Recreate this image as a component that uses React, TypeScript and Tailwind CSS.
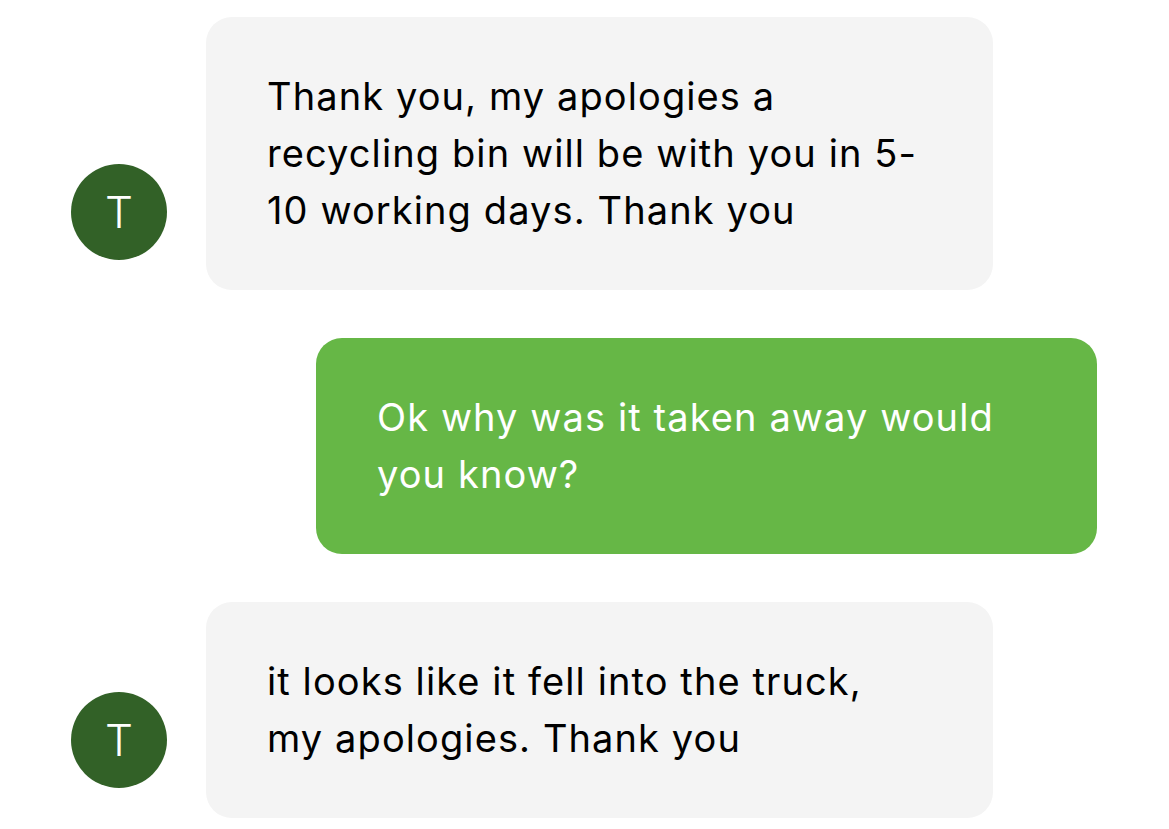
type Message = {
  from: "them" | "me"
  lines: string[]
}

const messages: Message[] = [
  {
    from: "them",
    lines: [
      "Thank you, my apologies a",
      "recycling bin will be with you in 5-",
      "10 working days. Thank you",
    ],
  },
  { from: "me", lines: ["Ok why was it taken away would", "you know?"] },
  {
    from: "them",
    lines: ["it looks like it fell into the truck,", "my apologies. Thank you"],
  },
]

function Avatar() {
  return (
    <div className="mb-[30px] flex h-[96px] w-[96px] shrink-0 items-center justify-center rounded-full bg-[#326127] text-[44px] font-light leading-none text-white">
      T
    </div>
  )
}

function Bubble({ msg }: { msg: Message }) {
  const mine = msg.from === "me"
  return (
    <div
      className={
        mine
          ? "w-[781px] rounded-[26px] bg-[#66b746] px-[61px] py-[51px] text-white"
          : "w-[787px] rounded-[26px] bg-[#f4f4f4] px-[61px] py-[51px] text-black"
      }
    >
      {msg.lines.map((line) => (
        <div
          key={line}
          className="whitespace-nowrap text-[38px] leading-[57px] tracking-[1.1px]"
        >
          {line}
        </div>
      ))}
    </div>
  )
}

export default function App() {
  return (
    <div
      className="flex min-h-screen w-[1169px] flex-col gap-[48px] bg-white pt-[17px] pb-[12px]"
      style={{ fontFamily: "Inter, 'Noto Sans', sans-serif" }}
    >
      {messages.map((msg, i) =>
        msg.from === "me" ? (
          <div key={i} className="flex justify-end pr-[72px]">
            <Bubble msg={msg} />
          </div>
        ) : (
          <div key={i} className="flex items-end gap-[39px] pl-[71px]">
            <Avatar />
            <Bubble msg={msg} />
          </div>
        )
      )}
    </div>
  )
}
